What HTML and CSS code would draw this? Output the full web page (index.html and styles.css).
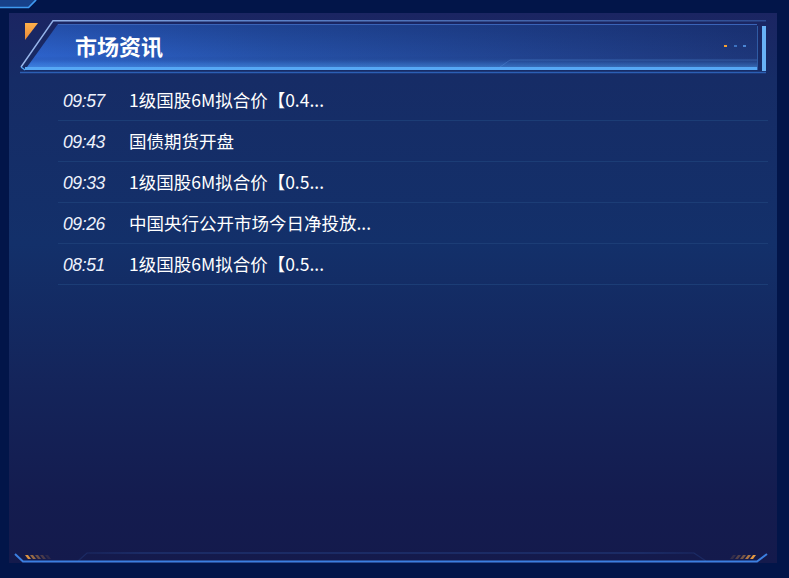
FILE: index.html
```html
<!DOCTYPE html>
<html lang="zh-CN">
<head>
<meta charset="utf-8">
<title>市场资讯</title>
<link rel="stylesheet" href="styles.css">
</head>
<body>
<svg class="corner-frag" width="40" height="10" viewBox="0 0 40 10">
  <polygon points="0,0 37,0 29,8 0,8" fill="#17418a"/>
  <polyline points="0,7.5 28.5,7.5 36,0" fill="none" stroke="#3f9af0" stroke-width="1.6"/>
</svg>
<section class="panel">
  <header class="panel-head">
    <svg class="head-bg" width="746" height="54" viewBox="0 0 746 54">
      <defs>
        <linearGradient id="fillH" x1="0" y1="0" x2="1" y2="0">
          <stop offset="0" stop-color="#2d63cc"/>
          <stop offset="0.35" stop-color="#2550a6"/>
          <stop offset="1" stop-color="#1d3679"/>
        </linearGradient>
        <linearGradient id="fillV" x1="0" y1="0" x2="0" y2="1">
          <stop offset="0" stop-color="#0d1f5a" stop-opacity="0.3"/>
          <stop offset="0.7" stop-color="#0d1f5a" stop-opacity="0"/>
          <stop offset="0.85" stop-color="#4a9af0" stop-opacity="0.25"/>
          <stop offset="1" stop-color="#5aaaf5" stop-opacity="0.6"/>
        </linearGradient>
        <linearGradient id="topLine" x1="0" y1="0" x2="1" y2="0">
          <stop offset="0" stop-color="#9ab8ec"/>
          <stop offset="0.3" stop-color="#5f86cc"/>
          <stop offset="1" stop-color="#2e4c92"/>
        </linearGradient>
        <linearGradient id="tri" x1="0" y1="0" x2="0" y2="1">
          <stop offset="0" stop-color="#ffb04a"/>
          <stop offset="1" stop-color="#e8893a"/>
        </linearGradient>
      </defs>
      <polygon points="5,3 18,3 5,20" fill="url(#tri)"/>
      <polyline points="1,47 33,0.8 746,0.8" fill="none" stroke="url(#topLine)" stroke-width="1.4"/>
      <polygon points="38,4 737,4 737,50 5,50" fill="url(#fillH)"/>
      <polygon points="38,4 737,4 737,50 5,50" fill="url(#fillV)"/>
      <line x1="38" y1="4.5" x2="737" y2="4.5" stroke="#3a64b8" stroke-width="1"/>
      <polyline points="480,47 490,40 737,40" fill="none" stroke="#5f95e0" stroke-opacity="0.35" stroke-width="1"/>
      <rect x="5" y="47" width="732" height="3" fill="#56a8f5"/>
      <line x1="0" y1="52.5" x2="746" y2="52.5" stroke="#2c5fb4" stroke-width="1.4"/>
      <line x1="1" y1="47" x2="5" y2="50" stroke="#56a8f5" stroke-width="1.2"/>
      <line x1="737.5" y1="6" x2="737.5" y2="50" stroke="#3f7ed0" stroke-opacity="0.6" stroke-width="1"/>
      <rect x="742" y="6" width="4" height="45" fill="#68b2f6"/>
      <rect x="704" y="25" width="3" height="2" fill="#f5a030"/>
      <rect x="714" y="25" width="3" height="2" fill="#3c72c0"/>
      <rect x="723" y="25" width="3" height="2" fill="#4a86d4"/>
    </svg>
    <h2 class="title">市场资讯</h2>
  </header>
  <ul class="news">
    <li class="news-row"><span class="time">09:57</span><span class="headline">1级国股6M拟合价【0.4...</span></li>
    <li class="news-row"><span class="time">09:43</span><span class="headline">国债期货开盘</span></li>
    <li class="news-row"><span class="time">09:33</span><span class="headline">1级国股6M拟合价【0.5...</span></li>
    <li class="news-row"><span class="time">09:26</span><span class="headline">中国央行公开市场今日净投放...</span></li>
    <li class="news-row"><span class="time">08:51</span><span class="headline">1级国股6M拟合价【0.5...</span></li>
  </ul>
  <svg class="panel-foot" width="768" height="14" viewBox="0 0 768 14">
    <defs>
      <linearGradient id="faint" x1="0" y1="0" x2="1" y2="0">
        <stop offset="0" stop-color="#2f5db0" stop-opacity="0.2"/>
        <stop offset="0.1" stop-color="#2f5db0" stop-opacity="0.5"/>
        <stop offset="0.9" stop-color="#2f5db0" stop-opacity="0.5"/>
        <stop offset="1" stop-color="#2f5db0" stop-opacity="0.2"/>
      </linearGradient>
    </defs>
    <polyline points="69,12 78,4 685,4 697,12" fill="none" stroke="url(#faint)" stroke-width="1.2"/>
    <polyline points="6,5 14,12.5 748,12.5 758,5" fill="none" stroke="#3b7fe0" stroke-width="2"/>
    <g fill="#f0a040">
      <polygon points="16,6 19,6 22,10 19,10" opacity="0.9"/>
      <polygon points="21,6 24,6 27,10 24,10" opacity="0.6"/>
      <polygon points="26,6 29,6 32,10 29,10" opacity="0.4"/>
      <polygon points="31,6 34,6 37,10 34,10" opacity="0.25"/>
      <polygon points="36,6 39,6 42,10 39,10" opacity="0.12"/>
      <polygon points="744,6 747,6 744,10 741,10" opacity="0.95"/>
      <polygon points="739,6 742,6 739,10 736,10" opacity="0.7"/>
      <polygon points="734,6 737,6 734,10 731,10" opacity="0.45"/>
      <polygon points="729,6 732,6 729,10 726,10" opacity="0.3"/>
      <polygon points="724,6 727,6 724,10 721,10" opacity="0.15"/>
    </g>
  </svg>
</section>
</body>
</html>
```
FILE: styles.css
```css
html, body {
  margin: 0;
  padding: 0;
}
body {
  background: #021549;
  width: 789px;
  height: 578px;
  overflow: hidden;
  position: relative;
  font-family: "Noto Sans CJK SC", "Noto Sans", sans-serif;
}
.corner-frag {
  position: absolute;
  left: 0;
  top: 0;
  display: block;
}
.panel {
  box-sizing: border-box;
  margin: 13px 0 0 9px;
  width: 768px;
  height: 550px;
  padding: 7px 0 0 11px;
  display: flex;
  flex-direction: column;
  background: linear-gradient(180deg, #1b2562 0%, #162c66 12%, #13306a 42%, #14245a 68%, #141c4f 88%, #141a4c 100%);
}
.panel-head {
  position: relative;
  width: 746px;
  height: 53px;
  flex: none;
  display: flex;
  align-items: center;
}
.head-bg {
  position: absolute;
  left: 0;
  top: 0;
  display: block;
}
.title {
  position: relative;
  margin: 0 0 4px 55px;
  font-size: 22px;
  font-weight: 700;
  line-height: 28px;
  color: #ffffff;
}
.news {
  list-style: none;
  margin: 7px 0 0 38px;
  padding: 0;
  width: 710px;
}
.news-row {
  height: 40px;
  border-bottom: 1px solid #1c3d76;
  display: flex;
  align-items: center;
  color: #ffffff;
}
.time {
  box-sizing: border-box;
  width: 71px;
  padding-left: 5px;
  font-family: "Liberation Sans", sans-serif;
  font-style: italic;
  font-size: 17.5px;
  letter-spacing: -0.4px;
  line-height: 22px;
  padding-top: 2px;
  color: #eef2fc;
}
.headline {
  font-size: 17.5px;
  line-height: 22px;
  color: #ffffff;
}
.panel-foot {
  display: block;
  margin-top: auto;
  margin-left: -11px;
  flex: none;
}
```
